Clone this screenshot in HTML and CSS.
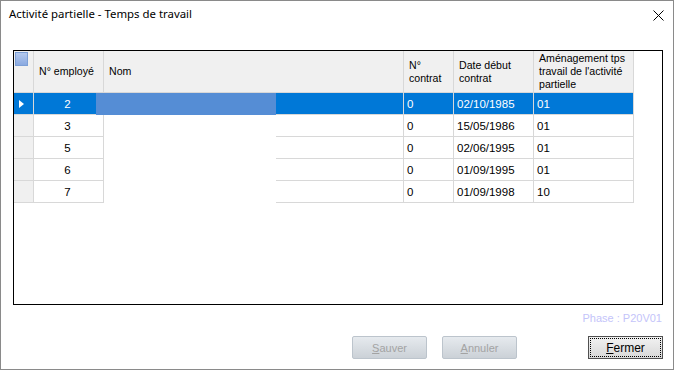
FILE: index.html
```html
<!DOCTYPE html>
<html lang="fr">
<head>
    <meta charset="UTF-8">
    <title>Activité partielle - Temps de travail</title>
    <link rel="stylesheet" href="styles.css">
</head>
<body>
    <div class="window">
        <div class="titlebar">
            <span class="title">Activité partielle - Temps de travail</span>
            <svg class="close" width="11" height="11" viewBox="0 0 11 11">
                <path d="M0.5 0.5 L10.5 10.5 M10.5 0.5 L0.5 10.5" stroke="#000" stroke-width="1" fill="none"/>
            </svg>
        </div>
        <div class="content">
            <div class="grid">
                <div class="rows">
                    <div class="cell head corner"><span class="corner-box"></span></div>
                    <div class="cell head">N° employé</div>
                    <div class="cell head">Nom</div>
                    <div class="cell head">N°<br>contrat</div>
                    <div class="cell head">Date début<br>contrat</div>
                    <div class="cell head">Aménagement tps<br>travail de l'activité<br>partielle</div>

                    <div class="cell rowhead selected"><span class="arrow"></span></div>
                    <div class="cell num selected">2</div>
                    <div class="cell selected"></div>
                    <div class="cell selected">0</div>
                    <div class="cell selected">02/10/1985</div>
                    <div class="cell selected">01</div>

                    <div class="cell rowhead"></div>
                    <div class="cell num">3</div>
                    <div class="cell"></div>
                    <div class="cell">0</div>
                    <div class="cell">15/05/1986</div>
                    <div class="cell">01</div>

                    <div class="cell rowhead"></div>
                    <div class="cell num">5</div>
                    <div class="cell"></div>
                    <div class="cell">0</div>
                    <div class="cell">02/06/1995</div>
                    <div class="cell">01</div>

                    <div class="cell rowhead"></div>
                    <div class="cell num">6</div>
                    <div class="cell"></div>
                    <div class="cell">0</div>
                    <div class="cell">01/09/1995</div>
                    <div class="cell">01</div>

                    <div class="cell rowhead"></div>
                    <div class="cell num">7</div>
                    <div class="cell"></div>
                    <div class="cell">0</div>
                    <div class="cell">01/09/1998</div>
                    <div class="cell">10</div>
                </div>
                <div class="mask mask-blue"></div>
                <div class="mask mask-white"></div>
            </div>
            <div class="phase">Phase : P20V01</div>
            <div class="buttons">
                <button class="btn" disabled><u>S</u>auver</button>
                <button class="btn" disabled><u>A</u>nnuler</button>
                <button class="btn btn-default"><u>F</u>ermer</button>
            </div>
        </div>
    </div>
</body>
</html>
```

FILE: styles.css
```css
body {
    margin: 0;
    background: #fff;
    font-family: "Liberation Sans", Arial, sans-serif;
    font-size: 11px;
    color: #000;
}
.window {
    width: 674px;
    height: 370px;
    box-sizing: border-box;
    border: 1px solid #8a8a8a;
    background: #fff;
}
.titlebar {
    position: relative;
    height: 30px;
    padding: 5px 0 0 8px;
    box-sizing: border-box;
}
.title {
    font-family: "Noto Sans", sans-serif;
    font-size: 11.4px;
    line-height: 16px;
}
.close {
    position: absolute;
    right: 9px;
    top: 9px;
}
.content {
    padding: 19px 10px 0 12px;
}
.grid {
    position: relative;
    height: 255px;
    box-sizing: border-box;
    border: 1px solid #000;
    background: #fff;
}
.rows {
    display: grid;
    grid-template-columns: 20px 70px 300px 50px 80px 100px;
    grid-template-rows: 42px repeat(5, 22px);
}
.cell {
    box-sizing: border-box;
    border-right: 1px solid #d8d8d8;
    border-bottom: 1px solid #d8d8d8;
    padding-left: 3px;
    display: flex;
    align-items: center;
    white-space: nowrap;
    font-size: 11.5px;
}
.head {
    background: #f0f0f0;
    padding-left: 5px;
    line-height: 13px;
    font-size: 10.6px;
}
.corner {
    align-items: flex-start;
    padding: 1px 0 0 1px;
}
.corner-box {
    width: 11px;
    height: 12px;
    border: 1px solid #7c9fd6;
    background: linear-gradient(#b4c9ee, #8aa9e0);
}
.rowhead {
    background: #f0f0f0;
    padding-left: 5px;
}
.num {
    justify-content: center;
    padding-left: 0;
    padding-right: 2px;
}
.selected {
    background: #0078d7;
    color: #fff;
}
.arrow {
    width: 0;
    height: 0;
    border-top: 4.5px solid transparent;
    border-bottom: 4.5px solid transparent;
    border-left: 5px solid #fff;
}
.mask {
    position: absolute;
}
.mask-blue {
    left: 82px;
    top: 42px;
    width: 180px;
    height: 22px;
    background: #558dd5;
}
.mask-white {
    left: 90px;
    top: 64px;
    width: 172px;
    height: 89px;
    background: #fff;
}
.phase {
    margin-top: 7px;
    text-align: right;
    color: #c4c4fa;
    line-height: 13px;
    padding-right: 1px;
}
.buttons {
    display: flex;
    justify-content: flex-end;
    margin-top: 11px;
}
.btn {
    width: 75px;
    height: 23px;
    margin-left: 15px;
    padding: 0;
    font-family: "Liberation Sans", Arial, sans-serif;
    font-size: 11px;
    border: 1px solid #bcc4cc;
    border-radius: 2px;
    background: linear-gradient(#e6eaee, #cbd1d7);
    color: #a3a3a3;
}
.btn-default {
    margin-left: 71px;
    border: 1px solid #505050;
    border-radius: 0;
    background: linear-gradient(#f2f2f2, #d8d8d8);
    color: #000;
    outline: 1px dotted #000;
    outline-offset: -3px;
    font-size: 12px;
}
```
